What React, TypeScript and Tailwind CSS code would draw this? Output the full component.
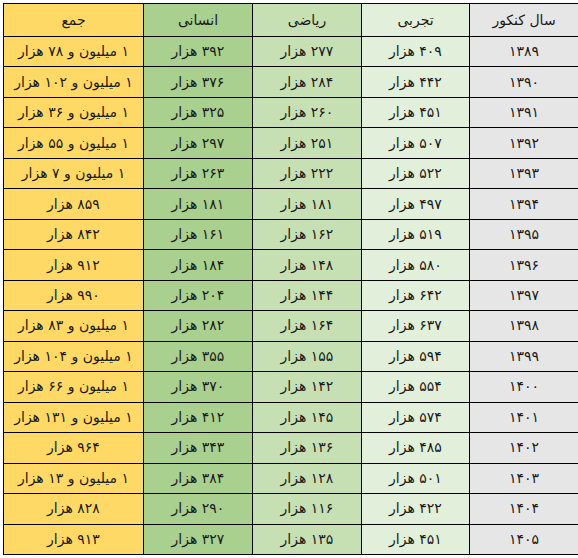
const rows: [string, string, string, string, string][] = [
  ['۱۳۸۹', '۴۰۹ هزار', '۲۷۷ هزار', '۳۹۲ هزار', '۱ میلیون و ۷۸ هزار'],
  ['۱۳۹۰', '۴۴۲ هزار', '۲۸۴ هزار', '۳۷۶ هزار', '۱ میلیون و ۱۰۲ هزار'],
  ['۱۳۹۱', '۴۵۱ هزار', '۲۶۰ هزار', '۳۲۵ هزار', '۱ میلیون و ۳۶ هزار'],
  ['۱۳۹۲', '۵۰۷ هزار', '۲۵۱ هزار', '۲۹۷ هزار', '۱ میلیون و ۵۵ هزار'],
  ['۱۳۹۳', '۵۲۲ هزار', '۲۲۲ هزار', '۲۶۳ هزار', '۱ میلیون و ۷ هزار'],
  ['۱۳۹۴', '۴۹۷ هزار', '۱۸۱ هزار', '۱۸۱ هزار', '۸۵۹ هزار'],
  ['۱۳۹۵', '۵۱۹ هزار', '۱۶۲ هزار', '۱۶۱ هزار', '۸۴۲ هزار'],
  ['۱۳۹۶', '۵۸۰ هزار', '۱۴۸ هزار', '۱۸۴ هزار', '۹۱۲ هزار'],
  ['۱۳۹۷', '۶۴۲ هزار', '۱۴۴ هزار', '۲۰۴ هزار', '۹۹۰ هزار'],
  ['۱۳۹۸', '۶۳۷ هزار', '۱۶۴ هزار', '۲۸۲ هزار', '۱ میلیون و ۸۳ هزار'],
  ['۱۳۹۹', '۵۹۴ هزار', '۱۵۵ هزار', '۳۵۵ هزار', '۱ میلیون و ۱۰۴ هزار'],
  ['۱۴۰۰', '۵۵۴ هزار', '۱۴۲ هزار', '۳۷۰ هزار', '۱ میلیون و ۶۶ هزار'],
  ['۱۴۰۱', '۵۷۴ هزار', '۱۴۵ هزار', '۴۱۲ هزار', '۱ میلیون و ۱۳۱ هزار'],
  ['۱۴۰۲', '۴۸۵ هزار', '۱۳۶ هزار', '۳۴۳ هزار', '۹۶۴ هزار'],
  ['۱۴۰۳', '۵۰۱ هزار', '۱۲۸ هزار', '۳۸۴ هزار', '۱ میلیون و ۱۳ هزار'],
  ['۱۴۰۴', '۴۲۲ هزار', '۱۱۶ هزار', '۲۹۰ هزار', '۸۲۸ هزار'],
  ['۱۴۰۵', '۴۵۱ هزار', '۱۳۵ هزار', '۳۲۷ هزار', '۹۱۳ هزار'],
];

const headers = ['سال کنکور', 'تجربی', 'ریاضی', 'انسانی', 'جمع'];
const colBg = ['bg-[#e7e6e6]', 'bg-[#e2efda]', 'bg-[#c6e0b4]', 'bg-[#a9d08e]', 'bg-[#ffd966]'];

export default function App() {
  return (
    <div className="bg-white pl-[3px] pt-[3px]">
      <table
        dir="rtl"
        className="h-[552px] w-[575px] table-fixed border-collapse text-center text-[14px] text-[#1a1a1a]"
        style={{ fontFamily: '"DejaVu Sans", sans-serif' }}
      >
        <colgroup>
          <col className="w-[109px]" />
          <col className="w-[108px]" />
          <col className="w-[109px]" />
          <col className="w-[109px]" />
          <col className="w-[140px]" />
        </colgroup>
        <thead>
          <tr className="h-[33px]">
            {headers.map((h, i) => (
              <th key={h} className={`border border-black font-normal ${colBg[i]}`}>
                {h}
              </th>
            ))}
          </tr>
        </thead>
        <tbody>
          {rows.map((r) => (
            <tr key={r[0]}>
              {r.map((c, i) => (
                <td key={i} className={`border border-black p-0 ${colBg[i]}`}>
                  {c}
                </td>
              ))}
            </tr>
          ))}
        </tbody>
      </table>
    </div>
  );
}
